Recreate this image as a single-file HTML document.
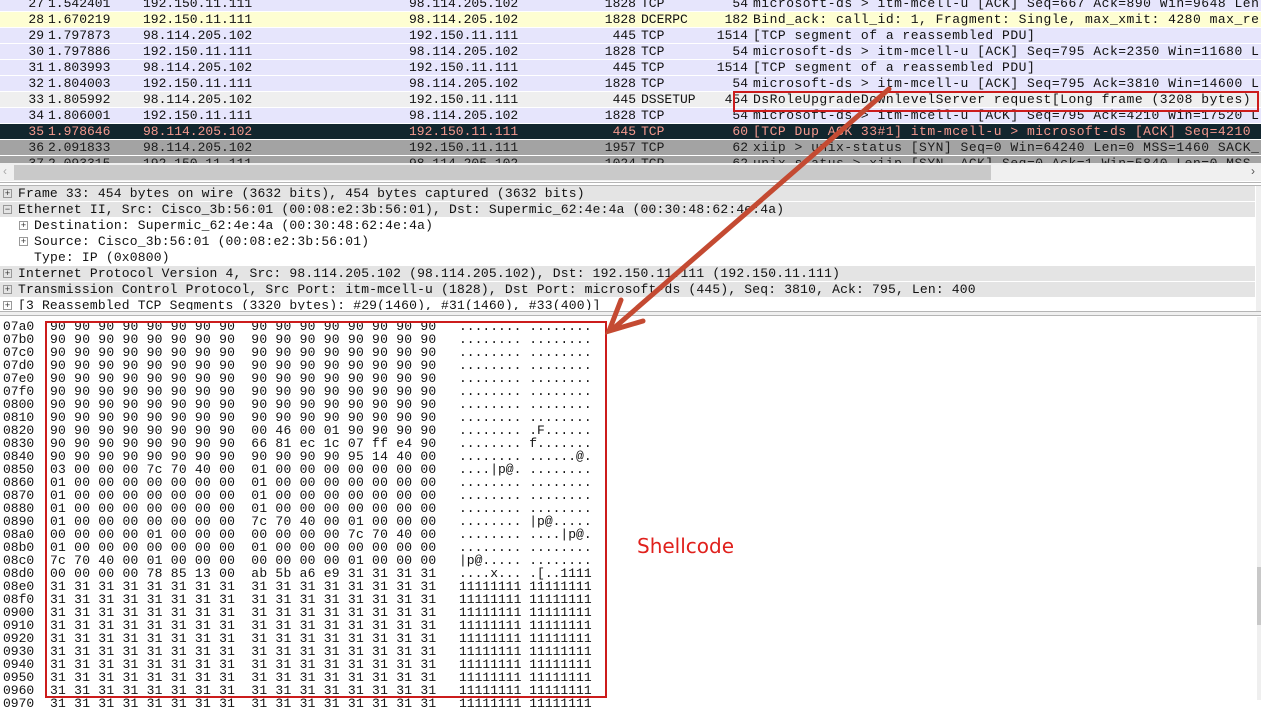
<!DOCTYPE html>
<html><head><meta charset="utf-8"><style>
body{margin:0;width:1261px;height:700px;overflow:hidden;background:#fff;position:relative;font-family:"Liberation Mono","DejaVu Sans Mono",monospace;font-size:13px;color:#111}
.r{position:absolute;left:0;width:1261px;height:15px;line-height:15px;white-space:pre;overflow:hidden;border-bottom:1px solid #fff}
.r span{position:absolute;top:0}
.no{right:1217px;text-align:right}
.t{left:48px}.s{left:143px}.d{left:409px}
.p{right:625px;text-align:right}.pr{left:641px}
.l{right:513px;text-align:right}.i{left:753px;letter-spacing:0.5px}
.lav{background:#e6e5fc}.yel{background:#fefed2}.sel{background:#efefef}
.dark{background:#12262e;color:#f59a8f}.gray{background:#a3a3a3;color:#1a1a1a}
.dt{position:absolute;left:0;width:1255px;height:15px;line-height:15px;white-space:pre;border-bottom:1px solid #fff;letter-spacing:0.18px}
.gr{background:#e4e4e4}
.bx{position:absolute;width:7px;height:7px;border:1px solid #999;top:3px;font-size:9px;line-height:7px;text-align:center;color:#333;font-family:"Liberation Sans",sans-serif;letter-spacing:0}
pre{position:absolute;margin:0;font-family:"Liberation Mono",monospace;font-size:13px;line-height:13px;color:#111}
</style></head><body>

<div class="r lav" style="top:-4px"><span class="no">27</span><span class="t">1.542401</span><span class="s">192.150.11.111</span><span class="d">98.114.205.102</span><span class="p">1828</span><span class="pr">TCP</span><span class="l">54</span><span class="i">microsoft-ds &gt; itm-mcell-u [ACK] Seq=667 Ack=890 Win=9648 Len</span></div>
<div class="r yel" style="top:12px"><span class="no">28</span><span class="t">1.670219</span><span class="s">192.150.11.111</span><span class="d">98.114.205.102</span><span class="p">1828</span><span class="pr">DCERPC</span><span class="l">182</span><span class="i">Bind_ack: call_id: 1, Fragment: Single, max_xmit: 4280 max_re</span></div>
<div class="r lav" style="top:28px"><span class="no">29</span><span class="t">1.797873</span><span class="s">98.114.205.102</span><span class="d">192.150.11.111</span><span class="p">445</span><span class="pr">TCP</span><span class="l">1514</span><span class="i">[TCP segment of a reassembled PDU]</span></div>
<div class="r lav" style="top:44px"><span class="no">30</span><span class="t">1.797886</span><span class="s">192.150.11.111</span><span class="d">98.114.205.102</span><span class="p">1828</span><span class="pr">TCP</span><span class="l">54</span><span class="i">microsoft-ds &gt; itm-mcell-u [ACK] Seq=795 Ack=2350 Win=11680 L</span></div>
<div class="r lav" style="top:60px"><span class="no">31</span><span class="t">1.803993</span><span class="s">98.114.205.102</span><span class="d">192.150.11.111</span><span class="p">445</span><span class="pr">TCP</span><span class="l">1514</span><span class="i">[TCP segment of a reassembled PDU]</span></div>
<div class="r lav" style="top:76px"><span class="no">32</span><span class="t">1.804003</span><span class="s">192.150.11.111</span><span class="d">98.114.205.102</span><span class="p">1828</span><span class="pr">TCP</span><span class="l">54</span><span class="i">microsoft-ds &gt; itm-mcell-u [ACK] Seq=795 Ack=3810 Win=14600 L</span></div>
<div class="r sel" style="top:92px"><span class="no">33</span><span class="t">1.805992</span><span class="s">98.114.205.102</span><span class="d">192.150.11.111</span><span class="p">445</span><span class="pr">DSSETUP</span><span class="l">454</span><span class="i">DsRoleUpgradeDownlevelServer request[Long frame (3208 bytes)</span></div>
<div class="r lav" style="top:108px"><span class="no">34</span><span class="t">1.806001</span><span class="s">192.150.11.111</span><span class="d">98.114.205.102</span><span class="p">1828</span><span class="pr">TCP</span><span class="l">54</span><span class="i">microsoft-ds &gt; itm-mcell-u [ACK] Seq=795 Ack=4210 Win=17520 L</span></div>
<div class="r dark" style="top:124px"><span class="no">35</span><span class="t">1.978646</span><span class="s">98.114.205.102</span><span class="d">192.150.11.111</span><span class="p">445</span><span class="pr">TCP</span><span class="l">60</span><span class="i">[TCP Dup ACK 33#1] itm-mcell-u &gt; microsoft-ds [ACK] Seq=4210</span></div>
<div class="r gray" style="top:140px"><span class="no">36</span><span class="t">2.091833</span><span class="s">98.114.205.102</span><span class="d">192.150.11.111</span><span class="p">1957</span><span class="pr">TCP</span><span class="l">62</span><span class="i">xiip &gt; unix-status [SYN] Seq=0 Win=64240 Len=0 MSS=1460 SACK_</span></div>
<div class="r gray" style="top:156px"><span class="no">37</span><span class="t">2.093315</span><span class="s">192.150.11.111</span><span class="d">98.114.205.102</span><span class="p">1024</span><span class="pr">TCP</span><span class="l">62</span><span class="i">unix-status &gt; xiip [SYN, ACK] Seq=0 Ack=1 Win=5840 Len=0 MSS</span></div>

<div style="position:absolute;left:0;top:163px;width:1261px;height:18px;background:#f0f0f0"></div>
<div style="position:absolute;left:14px;top:165px;width:977px;height:15px;background:#c9c9c9"></div>
<div style="position:absolute;left:3px;top:164px;font:12px 'Liberation Sans',sans-serif;color:#aaa">&lsaquo;</div>
<div style="position:absolute;left:1251px;top:164px;font:12px 'Liberation Sans',sans-serif;color:#555">&rsaquo;</div>
<div style="position:absolute;left:0;top:182px;width:1261px;height:1px;background:#b5b5b5"></div>
<div style="position:absolute;left:0;top:185px;width:1261px;height:1px;background:#b5b5b5"></div>

<div class="dt gr" style="top:186px"><span class="bx" style="left:3px">+</span><span style="position:absolute;left:18px">Frame 33: 454 bytes on wire (3632 bits), 454 bytes captured (3632 bits)</span></div>
<div class="dt gr" style="top:202px"><span class="bx" style="left:3px">−</span><span style="position:absolute;left:18px">Ethernet II, Src: Cisco_3b:56:01 (00:08:e2:3b:56:01), Dst: Supermic_62:4e:4a (00:30:48:62:4e:4a)</span></div>
<div class="dt" style="top:218px"><span class="bx" style="left:19px">+</span><span style="position:absolute;left:34px">Destination: Supermic_62:4e:4a (00:30:48:62:4e:4a)</span></div>
<div class="dt" style="top:234px"><span class="bx" style="left:19px">+</span><span style="position:absolute;left:34px">Source: Cisco_3b:56:01 (00:08:e2:3b:56:01)</span></div>
<div class="dt" style="top:250px"><span style="position:absolute;left:34px">Type: IP (0x0800)</span></div>
<div class="dt gr" style="top:266px"><span class="bx" style="left:3px">+</span><span style="position:absolute;left:18px">Internet Protocol Version 4, Src: 98.114.205.102 (98.114.205.102), Dst: 192.150.11.111 (192.150.11.111)</span></div>
<div class="dt gr" style="top:282px"><span class="bx" style="left:3px">+</span><span style="position:absolute;left:18px">Transmission Control Protocol, Src Port: itm-mcell-u (1828), Dst Port: microsoft-ds (445), Seq: 3810, Ack: 795, Len: 400</span></div>
<div class="dt" style="top:298px;height:12px;overflow:hidden"><span class="bx" style="left:3px">+</span><span style="position:absolute;left:18px">[3 Reassembled TCP Segments (3320 bytes): #29(1460), #31(1460), #33(400)]</span></div>
<div style="position:absolute;left:1256px;top:186px;width:5px;height:125px;background:#efefef"></div>
<div style="position:absolute;left:0;top:311px;width:1261px;height:1px;background:#b5b5b5"></div>
<div style="position:absolute;left:0;top:312px;width:1261px;height:3px;background:#f0f0f0"></div>
<div style="position:absolute;left:0;top:315px;width:1261px;height:1px;background:#b5b5b5"></div>

<pre style="left:3px;top:320px">07a0
07b0
07c0
07d0
07e0
07f0
0800
0810
0820
0830
0840
0850
0860
0870
0880
0890
08a0
08b0
08c0
08d0
08e0
08f0
0900
0910
0920
0930
0940
0950
0960
0970</pre>
<pre style="left:50px;top:320px;letter-spacing:0.25px">90 90 90 90 90 90 90 90  90 90 90 90 90 90 90 90
90 90 90 90 90 90 90 90  90 90 90 90 90 90 90 90
90 90 90 90 90 90 90 90  90 90 90 90 90 90 90 90
90 90 90 90 90 90 90 90  90 90 90 90 90 90 90 90
90 90 90 90 90 90 90 90  90 90 90 90 90 90 90 90
90 90 90 90 90 90 90 90  90 90 90 90 90 90 90 90
90 90 90 90 90 90 90 90  90 90 90 90 90 90 90 90
90 90 90 90 90 90 90 90  90 90 90 90 90 90 90 90
90 90 90 90 90 90 90 90  00 46 00 01 90 90 90 90
90 90 90 90 90 90 90 90  66 81 ec 1c 07 ff e4 90
90 90 90 90 90 90 90 90  90 90 90 90 95 14 40 00
03 00 00 00 7c 70 40 00  01 00 00 00 00 00 00 00
01 00 00 00 00 00 00 00  01 00 00 00 00 00 00 00
01 00 00 00 00 00 00 00  01 00 00 00 00 00 00 00
01 00 00 00 00 00 00 00  01 00 00 00 00 00 00 00
01 00 00 00 00 00 00 00  7c 70 40 00 01 00 00 00
00 00 00 00 01 00 00 00  00 00 00 00 7c 70 40 00
01 00 00 00 00 00 00 00  01 00 00 00 00 00 00 00
7c 70 40 00 01 00 00 00  00 00 00 00 01 00 00 00
00 00 00 00 78 85 13 00  ab 5b a6 e9 31 31 31 31
31 31 31 31 31 31 31 31  31 31 31 31 31 31 31 31
31 31 31 31 31 31 31 31  31 31 31 31 31 31 31 31
31 31 31 31 31 31 31 31  31 31 31 31 31 31 31 31
31 31 31 31 31 31 31 31  31 31 31 31 31 31 31 31
31 31 31 31 31 31 31 31  31 31 31 31 31 31 31 31
31 31 31 31 31 31 31 31  31 31 31 31 31 31 31 31
31 31 31 31 31 31 31 31  31 31 31 31 31 31 31 31
31 31 31 31 31 31 31 31  31 31 31 31 31 31 31 31
31 31 31 31 31 31 31 31  31 31 31 31 31 31 31 31
31 31 31 31 31 31 31 31  31 31 31 31 31 31 31 31</pre>
<pre style="left:459px;top:320px">........ ........
........ ........
........ ........
........ ........
........ ........
........ ........
........ ........
........ ........
........ .F......
........ f.......
........ ......@.
....|p@. ........
........ ........
........ ........
........ ........
........ |p@.....
........ ....|p@.
........ ........
|p@..... ........
....x... .[..1111
11111111 11111111
11111111 11111111
11111111 11111111
11111111 11111111
11111111 11111111
11111111 11111111
11111111 11111111
11111111 11111111
11111111 11111111
11111111 11111111</pre>
<div style="position:absolute;left:1257px;top:317px;width:4px;height:383px;background:#efefef"></div>
<div style="position:absolute;left:1257px;top:567px;width:4px;height:58px;background:#c8c8c8"></div>

<div style="position:absolute;left:45px;top:321px;width:558px;height:373px;border:2px solid #cc1c1c"></div>
<div style="position:absolute;left:733px;top:91px;width:522px;height:17px;border:2px solid #cc1c1c"></div>
<div style="position:absolute;left:637px;top:534px;font:20px 'DejaVu Sans','Liberation Sans',sans-serif;color:#e0201c">Shellcode</div>

<svg style="position:absolute;left:0;top:0" width="1261" height="700">
<line x1="889" y1="89" x2="614" y2="328" stroke="#c44a32" stroke-width="5" stroke-linecap="round"/>
<polyline points="621,300 609,331 643,321" fill="none" stroke="#c44a32" stroke-width="5" stroke-linecap="round" stroke-linejoin="miter"/>
</svg>
</body></html>
